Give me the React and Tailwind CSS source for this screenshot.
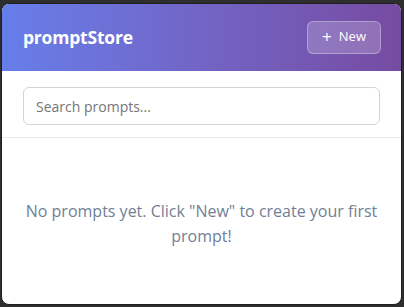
import React from "react";

const App = () => {
  return (
    <div className="w-[404px] h-[307px] bg-[#2e2e2e] pt-[3px] pl-[1px] pr-[2px] pb-[2px]" style={{ fontFamily: '"Open Sans", "Noto Sans", sans-serif' }}>
      <div className="h-full bg-white rounded-[8px] overflow-hidden flex flex-col border border-[#1f1f1f]">
        <div className="h-[67px] shrink-0 flex items-center justify-between pl-[21px] pr-[20px] bg-gradient-to-r from-[#667eea] to-[#764ba2]">
          <h1 className="text-white text-[17.5px] font-bold tracking-[-0.2px]">promptStore</h1>
          <button className="h-[33px] px-[14px] -mt-[1px] flex items-center gap-[7px] rounded-[6px] bg-white/20 border border-white/30 text-white text-[13px] font-medium">
            <span className="text-[17px] leading-none -mt-[2px]">+</span>
            New
          </button>
        </div>
        <div className="shrink-0 pt-[16px] pb-[12px] px-[21px] border-b border-[#e5e7eb]">
          <input
            type="text"
            placeholder="Search prompts..."
            className="w-full h-[38px] px-[12px] border border-[#d1d5db] rounded-[6px] text-[14px] placeholder:text-[#757575] outline-none"
          />
        </div>
        <div className="flex-1 flex justify-center pt-[61px] px-[18px]">
          <p className="text-center text-[#718096] text-[16px] leading-[25px]">
            No prompts yet. Click "New" to create your first prompt!
          </p>
        </div>
      </div>
    </div>
  );
};

export default App;
